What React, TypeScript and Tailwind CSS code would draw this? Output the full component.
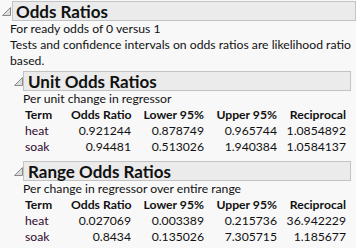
import React from "react";

const Tri = () => (
  <svg width="9" height="9" viewBox="0 0 9 9" className="shrink-0">
    <path d="M0.5 8.5 L8.5 8.5 L8.5 0.5 Z" fill="#dcdcdc" stroke="#8a8a8a" strokeWidth="1" />
  </svg>
);

type Row = { term: string; vals: string[] };

const cols = ["Odds Ratio", "Lower 95%", "Upper 95%", "Reciprocal"];

function OddsTable({ rows }: { rows: Row[] }) {
  return (
    <div className="grid grid-cols-[46px_60px_73px_73px_69px] pl-[2px] leading-[16px] whitespace-nowrap">
      <div className="font-bold">Term</div>
      {cols.map((c) => (
        <div key={c} className="font-bold text-right">{c}</div>
      ))}
      {rows.map((r) => (
        <React.Fragment key={r.term}>
          <div className="text-[#300830]">{r.term}</div>
          {r.vals.map((v, i) => (
            <div key={i} className="text-right">{v}</div>
          ))}
        </React.Fragment>
      ))}
    </div>
  );
}

function SubSection({ title, note, rows, className }: { title: string; note: string; rows: Row[]; className?: string }) {
  return (
    <div className={className}>
      <div className="flex items-center">
        <div className="w-[23px] pl-[14px] flex items-center"><Tri /></div>
        <div className="w-[328px] h-[20px] bg-[#ebebeb] border border-[#c3c3c3] flex items-center pl-[4px] text-[17px] font-bold leading-none">
          {title}
        </div>
      </div>
      <div className="pl-[23px]">
        <div className="leading-[16px]">{note}</div>
        <OddsTable rows={rows} />
      </div>
    </div>
  );
}

export default function App() {
  return (
    <div className="w-[356px] h-[248px] overflow-hidden bg-[#f8f8f8] text-[#111] text-[12.2px] pt-[1px]" style={{ fontFamily: 'Lato, sans-serif' }}>
      <div className="flex items-center">
        <div className="w-[12px] pl-[2px] flex items-center"><Tri /></div>
        <div className="w-[344px] h-[20px] bg-[#ebebeb] border border-[#c3c3c3] flex items-center pl-[3px] text-[17px] font-bold leading-none">
          Odds Ratios
        </div>
      </div>
      <div className="pl-[10px] leading-[16px]">
        <div>For ready odds of 0 versus 1</div>
        <div>Tests and confidence intervals on odds ratios are likelihood ratio based.</div>
      </div>
      <SubSection
        className="mt-[2px]"
        title="Unit Odds Ratios"
        note="Per unit change in regressor"
        rows={[
          { term: "heat", vals: ["0.921244", "0.878749", "0.965744", "1.0854892"] },
          { term: "soak", vals: ["0.94481", "0.513026", "1.940384", "1.0584137"] },
        ]}
      />
      <SubSection
        className="mt-[6px]"
        title="Range Odds Ratios"
        note="Per change in regressor over entire range"
        rows={[
          { term: "heat", vals: ["0.027069", "0.003389", "0.215736", "36.942229"] },
          { term: "soak", vals: ["0.8434", "0.135026", "7.305715", "1.185677"] },
        ]}
      />
    </div>
  );
}
